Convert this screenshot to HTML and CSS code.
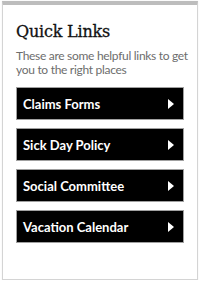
FILE: index.html
```html
<!DOCTYPE html>
<html>

<head>
  <title>Quick Links</title>
  <link rel="stylesheet" href="styles.css">
</head>

<body>
  <div class="card">
    <h2 class="card-title">Quick Links</h2>
    <p class="card-intro">These are some helpful links to get you to the right places</p>
    <ul class="links">
      <li><a href="#">Claims Forms <span class="arrow"></span></a></li>
      <li><a href="#">Sick Day Policy <span class="arrow"></span></a></li>
      <li><a href="#">Social Committee <span class="arrow"></span></a></li>
      <li><a href="#">Vacation Calendar <span class="arrow"></span></a></li>
    </ul>
  </div>
</body>

</html>
```

FILE: styles.css
```css
body {
  margin: 0;
  padding: 1px 2px 0 2px;
  background: #fff;
}
.card {
  height: 274px;
  border: 1px solid #d4d4d4;
  border-top: 4px solid #bdbdbd;
  box-shadow: 0 0 1px #e4e4e4;
  padding: 0 13px;
  box-sizing: content-box;
}
.card-title {
  margin: 17px 0 0 0;
  font-family: "DejaVu Serif", serif;
  font-weight: normal;
  font-size: 16px;
  line-height: 20px;
  letter-spacing: -0.2px;
  color: #111;
  -webkit-text-stroke: 0.3px #111;
}
.card-intro {
  margin: 7px -8px 0 0;
  font-family: "Lato", sans-serif;
  font-size: 12px;
  line-height: 14px;
  letter-spacing: -0.3px;
  color: #6d6d6d;
}
.links {
  list-style: none;
  margin: 10px 0 0 0;
  padding: 0;
}
.links li {
  margin-bottom: 8px;
}
.links a {
  display: flex;
  align-items: center;
  justify-content: space-between;
  height: 31px;
  padding: 0 9px 0 6px;
  background: #000;
  border: 1px solid #a0a0a0;
  color: #fff;
  text-decoration: none;
  font-family: "Lato", sans-serif;
  font-weight: 700;
  font-size: 13px;
}
.arrow {
  width: 0;
  height: 0;
  border-top: 5px solid transparent;
  border-bottom: 5px solid transparent;
  border-left: 6px solid #fff;
}
```
